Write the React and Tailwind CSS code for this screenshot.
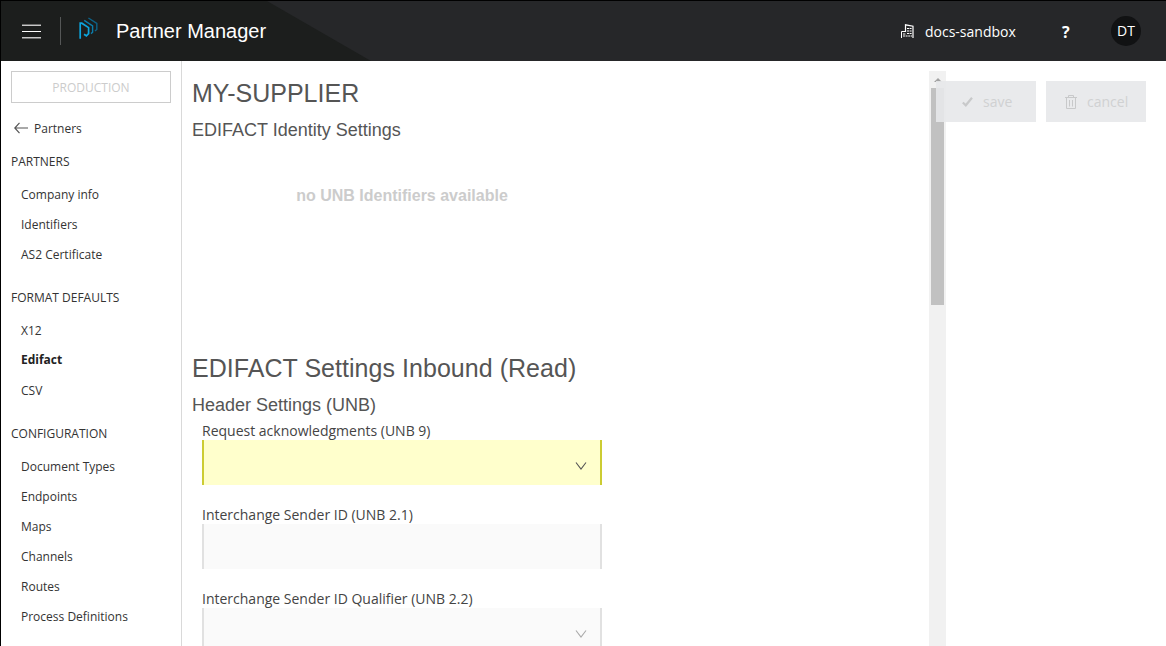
const groups = [
  { title: "PARTNERS", items: ["Company info", "Identifiers", "AS2 Certificate"] },
  { title: "FORMAT DEFAULTS", items: ["X12", "Edifact", "CSV"] },
  {
    title: "CONFIGURATION",
    items: ["Document Types", "Endpoints", "Maps", "Channels", "Routes", "Process Definitions"],
  },
];

function Logo() {
  return (
    <svg className="h-6 w-5" viewBox="0 0 20 24" fill="none" strokeWidth="1.7">
      <path d="M1.2 21.8V6.2H2.8L9.6 10.6V16.6L7.4 18.8L5 17.2" stroke="#0ca4dc" />
      <path d="M5.2 3.4L13.6 8.8V15.2L12 16.6" stroke="#0b7dab" strokeWidth="1.4" />
      <path d="M9.4 1L17.8 6.4V12.4L16 14" stroke="#0d6287" strokeWidth="1.4" />
    </svg>
  );
}

function Building() {
  return (
    <svg className="h-[14px] w-[13px]" viewBox="0 0 13 14" fill="none" stroke="#fff">
      <path d="M0.5 14V7.5H4" />
      <path d="M4.5 8V0.8L12 2.2V14" strokeWidth="1.2" />
      <path d="M6 4.5H11M6 7H11M6 9.5H11M2 10H5M2 12H11" strokeWidth="1.1" strokeDasharray="2 0.6" />
    </svg>
  );
}

function Header() {
  return (
    <header className="relative flex h-[60px] shrink-0 items-center bg-[#262729] text-white">
      <svg className="absolute left-0 top-0 h-[60px] w-[371px]" viewBox="0 0 371 60">
        <path d="M0 0H266L370 60H0Z" fill="#1c1e1d" />
      </svg>
      <div className="relative flex items-center">
        <div className="ml-[21px] flex w-[19px] flex-col gap-[5px]">
          <span className="h-[2px] border-t border-[#6d6e6d] bg-[#c8c8c8]" />
          <span className="h-px bg-white" />
          <span className="h-[2px] border-b border-[#6d6e6d] bg-[#c8c8c8]" />
        </div>
        <div className="ml-[19px] h-7 w-px bg-[#555757]" />
        <div className="ml-[18px] -mt-1 flex"><Logo /></div>
        <h1 className="ml-[17px] whitespace-nowrap font-['Liberation_Sans',sans-serif] text-[20px] leading-6">Partner Manager</h1>
      </div>
      <div className="ml-auto flex items-center pr-[25px]">
        <Building />
        <span className="ml-[11px] w-[90px] whitespace-nowrap pt-[2px] text-[14px] leading-5">docs-sandbox</span>
        <span className="ml-[47px] w-2 pt-[2px] text-[16px] font-bold leading-5">?</span>
        <span className="ml-[41px] flex size-[30px] items-center justify-center rounded-full bg-[#111213] text-[14px] leading-[28px]"><span>DT</span></span>
      </div>
    </header>
  );
}

function Sidebar() {
  return (
    <aside className="w-[181px] shrink-0 border-r border-[#d9d9d9] px-[10px] pt-[10px] text-[12px] text-[#333]">
      <div className="flex h-8 w-40 items-center justify-center border border-[#ccc] pt-[2px] text-[#ccc]">PRODUCTION</div>
      <div className="mt-[15px] flex h-5 items-center">
        <svg className="ml-[3px] h-3 w-[14px]" viewBox="0 0 14 12" fill="none" stroke="#555" strokeWidth="1.2">
          <path d="M14 6H0.8M5.5 0.8L0.8 6L5.5 11.2" />
        </svg>
        <span className="ml-[6px] pt-[2px]">Partners</span>
      </div>
      <nav className="pt-4">
        {groups.map((g) => (
          <section key={g.title} className="mb-5">
            <h2 className="mb-[10px] h-4 leading-4">{g.title}</h2>
            {g.items.map((t) => (
              <a
                key={t}
                className={t === "Edifact" ? "block h-[30px] pl-[10px] font-bold leading-[28px] text-[#222]" : "block h-[30px] pl-[10px] leading-[30px]"}
              >
                {t}
              </a>
            ))}
          </section>
        ))}
      </nav>
    </aside>
  );
}

function Chevron({ active }) {
  return (
    <svg className={active ? "mr-[13px] mt-[6px] h-2 w-3 text-[#555]" : "mr-[13px] mt-[6px] h-2 w-3 text-[#aaa]"} viewBox="0 0 12 8" fill="none" stroke="currentColor" strokeWidth="1.1">
      <path d="M1 0.5L6 7L11 0.5" />
    </svg>
  );
}

function Field({ label, active, select }) {
  return (
    <div className="mb-[19px] ml-[10px] w-[400px]">
      <label className="block h-5 whitespace-nowrap text-[14px] leading-[22px] text-[#444]">{label}</label>
      <div
        className={
          active
            ? "flex h-[45px] items-center justify-end border-x-2 border-[#cc3] bg-[#ffc]"
            : "flex h-[45px] items-center justify-end border-x-2 border-[#e1e1e1] bg-[#fafafa]"
        }
      >
        {select && <Chevron active={active} />}
      </div>
    </div>
  );
}

function Scrollbar() {
  return (
    <div className="mt-[10px] w-[17px] shrink-0 bg-[#f1f1f1]">
      <div className="flex h-[17px] items-center justify-center">
        <svg className="h-1 w-2" viewBox="0 0 8 4"><path d="M0 4L4 0L8 4Z" fill="#a3a3a3" /></svg>
      </div>
      <div className="mx-[2px] h-[217px] bg-[#c1c1c1]" />
    </div>
  );
}

function Actions() {
  return (
    <div className="relative -ml-[10px] mt-5 flex h-[41px] gap-[10px] text-[14px] text-[#d0d1d2]">
      <button className="flex w-[100px] items-center bg-[#e7e8ea]/90">
        <svg className="ml-[26px] h-[10px] w-[11px]" viewBox="0 0 11 10" fill="none" stroke="#c8c9ca" strokeWidth="2.2">
          <path d="M0.8 5.5L3.8 8.3L10 0.8" />
        </svg>
        <span className="ml-[10px]">save</span>
      </button>
      <button className="flex w-[100px] items-center bg-[#e7e8ea]/90">
        <svg className="ml-[19px] h-[14px] w-3" viewBox="0 0 12 14" fill="none" stroke="#c8c9ca">
          <path d="M0 2.5H12M3.5 2V0.5H8.5V2M1.5 3V13.5H10.5V3M4.5 5V11.5M7.5 5V11.5" />
        </svg>
        <span className="ml-[10px]">cancel</span>
      </button>
    </div>
  );
}

export default function App() {
  return (
    <div className="flex h-[646px] w-[1166px] flex-col overflow-hidden border-l border-t border-black bg-white font-['Open_Sans',sans-serif]">
      <Header />
      <div className="flex min-h-0 flex-1">
        <Sidebar />
        <main className="w-[747px] shrink-0 overflow-hidden pl-[10px] pt-[17px]">
          <div className="font-['Liberation_Sans',sans-serif] text-[#555]">
            <h2 className="text-[25px] leading-[30px]">MY-SUPPLIER</h2>
            <h3 className="mt-[11px] text-[18px] leading-[22px]">EDIFACT Identity Settings</h3>
            <p className="mt-[45px] w-[420px] text-center text-[16px] font-bold leading-5 text-[#ccc]">no UNB Identifiers available</p>
            <h2 className="mt-[147px] text-[25px] leading-[30px] tracking-[0.04px]">EDIFACT Settings Inbound (Read)</h2>
            <h3 className="mt-[11px] text-[18px] leading-[22px]">Header Settings (UNB)</h3>
          </div>
          <div className="pt-[4px]">
            <Field label="Request acknowledgments (UNB 9)" active select />
            <Field label="Interchange Sender ID (UNB 2.1)" />
            <Field label="Interchange Sender ID Qualifier (UNB 2.2)" select />
          </div>
        </main>
        <Scrollbar />
        <Actions />
      </div>
    </div>
  );
}
